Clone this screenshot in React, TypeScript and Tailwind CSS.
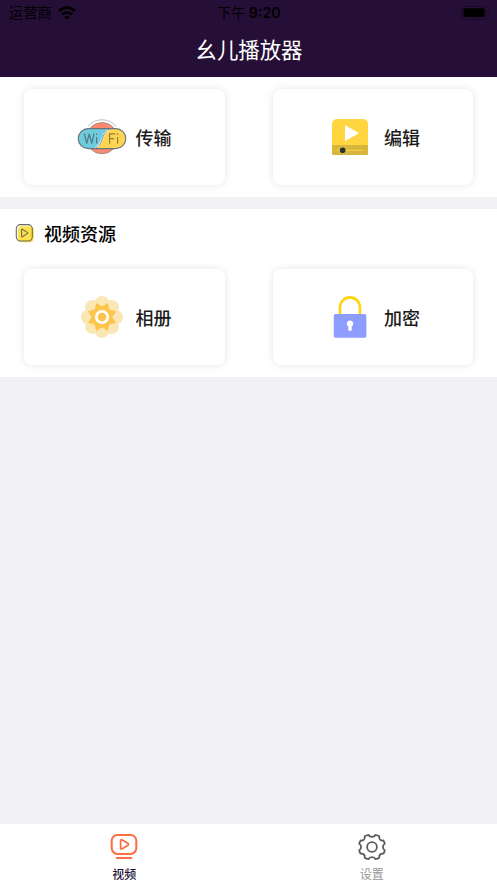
import type { ReactNode } from "react";

const WifiSignal = () => (
  <svg width="18" height="14" viewBox="0 0 18 14" fill="none" stroke="#000" strokeWidth="2.8">
    <path d="M1 5C5.6.6 12.4.6 17 5" />
    <path d="M4 8.6c2.9-2.7 7.1-2.7 10 0" />
    <path d="M9 13.8 6.2 11c1.6-1.4 4-1.4 5.6 0z" fill="#000" stroke="none" />
  </svg>
);

const Battery = () => (
  <svg width="29" height="14" viewBox="0 0 29 14">
    <rect x="0.5" y="0.5" width="25" height="12.4" rx="3.6" fill="none" stroke="#180a24" />
    <rect x="2.4" y="2.3" width="21.2" height="8.8" rx="1.8" fill="#000" />
    <path d="M27.2 4.8c1.5.6 1.5 3.4 0 4z" fill="#180a24" />
  </svg>
);

const TransferIcon = () => (
  <svg className="overflow-visible" width="48" height="48" viewBox="0 0 48 48" fill="none">
    <path d="M10 13.2a18.4 18.4 0 0 1 28 0" stroke="#b5b9bb" strokeWidth="0.9" />
    <circle cx="24" cy="25.2" r="15.6" fill="#fd8a6c" stroke="#8f8583" strokeWidth="0.8" />
    <rect x="0.2" y="15.6" width="47.6" height="20" rx="10" fill="#ffd450" />
    <path d="M10.2 15.6h22.5c-4.7.7-6.4 4.9-8 9.2-2.1 5.8-4 9.9-8 10.8h-6.5a10 10 0 0 1 0-20z" fill="#6ecbdc" />
    <path d="M32.7 15.8c-4.7.7-6.4 4.8-8 9.1-2.1 5.7-4 9.6-8 10.5" stroke="#fff" strokeWidth="2" />
    <path d="M32.7 15.8c-4.7.7-6.4 4.8-8 9.1-2.1 5.7-4 9.6-8 10.5" stroke="#66767d" strokeWidth="0.9" />
    <rect x="0.2" y="15.6" width="47.6" height="20" rx="10" stroke="#66767d" strokeWidth="1.1" />
    <g stroke="#4f7783" strokeWidth="1.15" strokeLinejoin="round">
      <path d="m6.4 20.6 2.3 9.8 2.5-9.4 2.5 9.4 2.3-9.8" />
      <path d="M18.6 24v6.6M18.6 20.6v1.5" />
    </g>
    <g stroke="#927b3d" strokeWidth="1.15">
      <path d="M31.6 30.7v-9.8h5.6M31.6 25.6h4.6" />
      <path d="M39.6 24v6.7M39.6 20.6v1.5" />
    </g>
  </svg>
);

const EditIcon = () => (
  <svg width="48" height="48" viewBox="0 0 48 48">
    <path d="M11 6h26a5 5 0 0 1 5 5v21H6V11a5 5 0 0 1 5-5z" fill="#ffd63f" />
    <path d="M6 32h36v8.8a1.2 1.2 0 0 1-1.2 1.2H7.2A1.2 1.2 0 0 1 6 40.8z" fill="#d7b63d" />
    <path d="M19.7 12.5 32.1 19.5q1 .6 0 1.2l-12.4 7.1q-.7.4-.7-.5V13q0-.9.7-.5z" fill="#fff" />
    <path d="M11 37.3h26" stroke="#ffd63f" strokeWidth="1" />
    <circle cx="16.7" cy="37.2" r="2.8" fill="#263238" />
  </svg>
);

const petals = [0, 45, 90, 135, 180, 225, 270, 315];

const AlbumIcon = () => (
  <svg width="48" height="48" viewBox="0 0 48 48">
    {petals.map((angle) => (
      <circle key={angle} cx="24" cy="10.3" r="7.3" fill="#fbe7b5" transform={`rotate(${angle} 24 24)`} />
    ))}
    <path
      d="M18.2 9.9 24 13.6 29.8 9.9 31.4 16.6 38.1 18.2 34.4 24 38.1 29.8 31.4 31.4 29.8 38.1 24 34.4 18.2 38.1 16.6 31.4 9.9 29.8 13.6 24 9.9 18.2 16.6 16.6z"
      fill="#fdc54c"
    />
    <circle cx="24" cy="24" r="5.7" fill="#fdc04b" stroke="#fff" strokeWidth="2.8" />
  </svg>
);

const LockIcon = () => (
  <svg width="48" height="48" viewBox="0 0 48 48">
    <path d="M14 22v-7.6a10 10 0 0 1 20 0V22" fill="none" stroke="#ffd50a" strokeWidth="2.6" />
    <rect x="7.8" y="21" width="32.6" height="23.8" rx="1.8" fill="#8d9cff" />
    <path d="M24 27.4a3.3 3.3 0 0 1 1.7 6.1v2.9a1.7 1.7 0 0 1-3.4 0v-2.9a3.3 3.3 0 0 1 1.7-6.1z" fill="#fff" />
  </svg>
);

const SectionIcon = () => (
  <svg width="20" height="20" viewBox="0 0 20 20" fill="none">
    <rect x="3" y="3.2" width="15.8" height="16" rx="4" fill="#ffe14c" />
    <rect x="1.3" y="1.6" width="16" height="16.4" rx="4.2" stroke="#6d6a58" strokeWidth="1.1" />
    <path d="M6.6 6.7v6.6q0 .8.7.4l5.3-3.3q.6-.4 0-.8L7.3 6.3q-.7-.4-.7.4z" stroke="#6d6a58" strokeWidth="1.1" />
  </svg>
);

const VideoTabIcon = () => (
  <svg width="28" height="28" viewBox="0 0 28 28" fill="none" stroke="#ff6b43" strokeWidth="2">
    <rect x="1.7" y="1.9" width="24.6" height="19" rx="5.8" />
    <path d="M10.6 8v6.8q0 1.9 1.7.9l5.4-3.2q1.6-1.1 0-2.2l-5.4-3.3q-1.7-.9-1.7 1z" strokeWidth="1.7" />
    <path d="M6.6 25h14.8" strokeLinecap="round" />
  </svg>
);

const SettingsTabIcon = () => (
  <svg width="28" height="28" viewBox="0 0 28 28" fill="none" stroke="#5c5c5c" strokeWidth="1.8" strokeLinejoin="round">
    <path d="M10.5 1.8q.9 2 3.5 2t3.5-2q2.3.4 3.8 1.5-.5 2 .8 3.3t3.3.9q1 1.5 1.4 3.3-1.9 1-1.9 3.2t1.9 3.2q-.4 1.9-1.4 3.5-2-.5-3.3.8t-.8 3.2q-1.5 1.1-3.8 1.5-.9-2-3.5-2t-3.5 2q-2.3-.4-3.8-1.5.5-1.9-.8-3.2t-3.3-.8q-1-1.6-1.4-3.5 1.9-1 1.9-3.2t-1.9-3.2q.4-1.8 1.4-3.3 2 .4 3.3-.9t.8-3.3q1.5-1.1 3.8-1.5z" />
    <circle cx="14" cy="14" r="4.9" />
  </svg>
);

const ActionCard = ({ label, children }: { label: string; children: ReactNode }) => (
  <button className="flex h-24 items-center gap-2.5 rounded-lg bg-white pl-[53.5px] text-lg font-medium text-[#1c1c1c] shadow-[0_0_8px_rgba(0,0,0,0.1)]">
    {children}
    <span className="pt-1">{label}</span>
  </button>
);

export default function App() {
  return (
    <div className="flex h-screen flex-col bg-[#f2f1f6] font-['Liberation_Sans','Noto_Sans_CJK_SC',sans-serif]">
      <header className="h-[77px] bg-[#260f36]">
        <div className="grid h-[26px] grid-cols-3 items-center pr-[7px] pl-[9px] text-sm leading-5 text-black">
          <div className="flex items-center gap-1.5">
            <span className="text-[14.3px]">运营商</span>
            <WifiSignal />
          </div>
          <div className="flex items-center justify-center gap-[3.5px] pr-px">
            <span>下午</span>
            <span className="font-['Inter',sans-serif] text-[14.2px] font-semibold">9:20</span>
          </div>
          <div className="flex justify-end">
            <Battery />
          </div>
        </div>
        <h1 className="pt-[9px] pl-px text-center text-[21.4px] leading-8 text-white">幺儿播放器</h1>
      </header>

      <section className="grid grid-cols-2 gap-12 bg-white px-6 py-3">
        <ActionCard label="传输">
          <TransferIcon />
        </ActionCard>
        <ActionCard label="编辑">
          <EditIcon />
        </ActionCard>
      </section>

      <section className="mt-3 bg-white">
        <div className="flex h-12 items-center gap-[9px] pl-[15px]">
          <SectionIcon />
          <h2 className="pt-1 text-lg font-medium text-black">视频资源</h2>
        </div>
        <div className="grid grid-cols-2 gap-12 px-6 py-3">
          <ActionCard label="相册">
            <AlbumIcon />
          </ActionCard>
          <ActionCard label="加密">
            <LockIcon />
          </ActionCard>
        </div>
      </section>

      <nav className="mt-auto grid h-[59px] grid-cols-2 bg-white pt-[9px] text-xs leading-[18px]">
        <button className="flex flex-col items-center gap-[5px] font-medium text-[#260f36]">
          <VideoTabIcon />
          <span>视频</span>
        </button>
        <button className="flex flex-col items-center gap-[5px] pr-0.5 text-[#999]">
          <SettingsTabIcon />
          <span>设置</span>
        </button>
      </nav>
    </div>
  );
}
